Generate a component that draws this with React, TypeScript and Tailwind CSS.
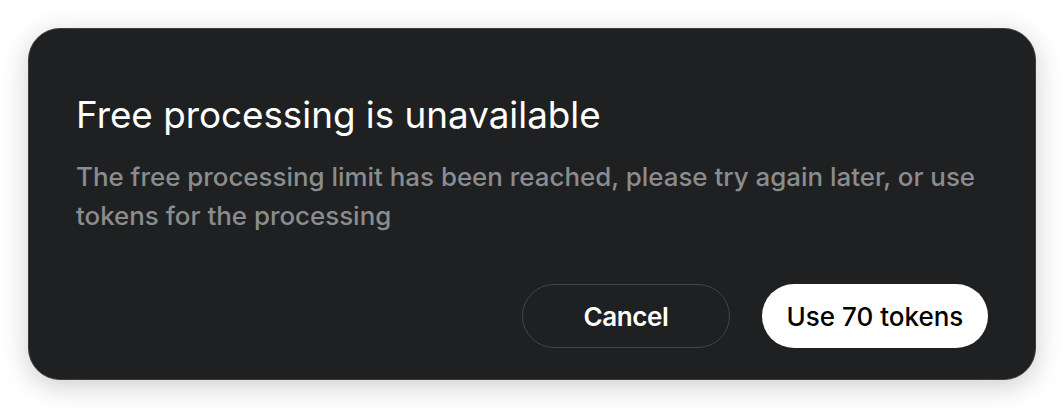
import React from "react";

export default function App() {
  return (
    <div className="w-[1064px] h-[408px] bg-white flex items-start justify-start p-[28px]" style={{ fontFamily: "Inter, 'Noto Sans', sans-serif" }}>
      <div className="w-[1008px] h-[352px] rounded-[32px] bg-[#1f2021] border border-[#3d3e40] shadow-[0_6px_28px_rgba(0,0,0,0.2)] flex flex-col pl-[47px] pr-[47px] pt-[64px] pb-[31px]">
        <h1 className="text-[36.8px] leading-[44px] font-normal text-white">Free processing is unavailable</h1>
        <p className="mt-[20px] text-[25.9px] leading-[39px] font-medium text-[#8b8c8e]">
          The free processing limit has been reached, please try again later, or use tokens for the processing
        </p>
        <div className="mt-auto flex justify-end gap-[32px]">
          <button className="w-[208px] h-[64px] rounded-full border border-[#434447] text-white text-[26px] font-semibold tracking-[-0.4px]">Cancel</button>
          <button className="w-[226px] h-[64px] rounded-full bg-white text-black text-[26px] font-medium">Use 70 tokens</button>
        </div>
      </div>
    </div>
  );
}
